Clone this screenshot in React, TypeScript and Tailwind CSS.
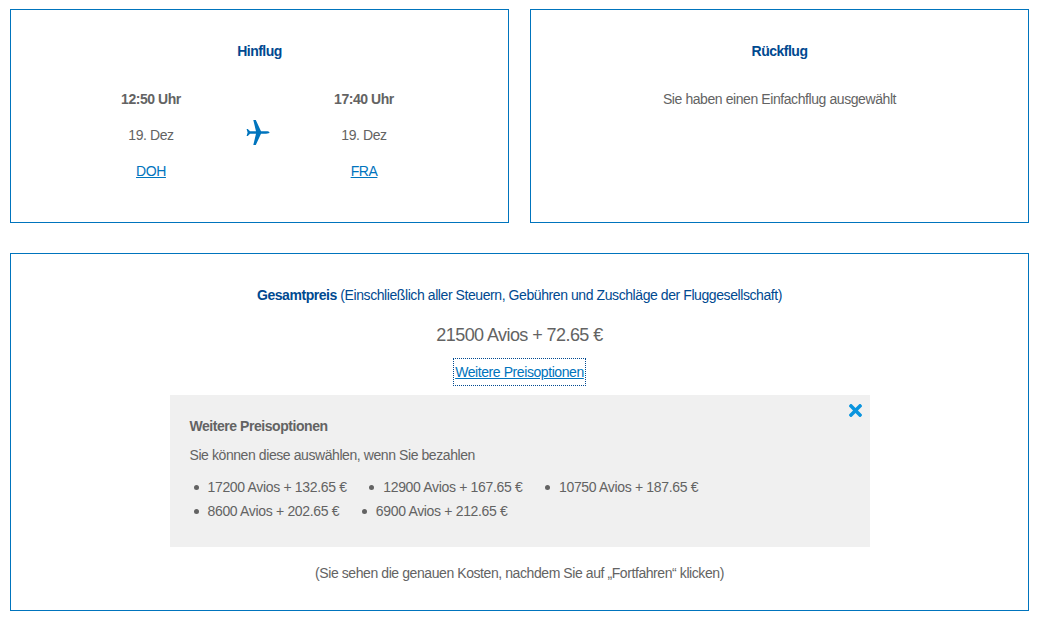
import { FaTimes } from "react-icons/fa";

const options = [
  ["17200 Avios + 132.65 €", "12900 Avios + 167.65 €", "10750 Avios + 187.65 €"],
  ["8600 Avios + 202.65 €", "6900 Avios + 212.65 €"],
];

const Plane = () => (
  <svg viewBox="0 0 24 25" className="w-6 h-[25px] text-[#0074bd]" fill="currentColor">
    <path d="M23.5 12.5C23.5 11.8 22 11.3 20 11.3L15 11.3L9.8 0L7.3 0L10 11.3L4 11.3L1.8 9L0.6 9L1.6 12.5L0.6 16L1.8 16L4 13.7L10 13.7L7.3 25L9.8 25L15 13.7L20 13.7C22 13.7 23.5 13.2 23.5 12.5Z" />
  </svg>
);

const Endpoint = ({ time, code }: { time: string; code: string }) => (
  <div className="flex flex-col items-center">
    <div className="h-9 leading-9 font-bold tracking-[-0.45px]">{time}</div>
    <div className="h-9 leading-9">19. Dez</div>
    <a href="#" className="h-9 leading-9 text-[#0074bd] underline">
      {code}
    </a>
  </div>
);

export default function App() {
  return (
    <div className="w-[1046px] h-[630px] overflow-hidden bg-white pl-2.5 pt-[9px] font-['Liberation_Sans',Arial,sans-serif] text-sm tracking-[-0.42px] text-[#636363]">
      <div className="w-[1019px] flex flex-col gap-[30px]">
        <div className="flex gap-[21px]">
          <section className="w-[499px] h-[214px] border border-[#0074bd] pt-[31px]">
            <h2 className="h-5 leading-5 text-center font-bold tracking-[-0.5px] text-[#004990]">Hinflug</h2>
            <div className="mt-[20px] ml-[65px] grid grid-cols-[150px_63px_150px]">
              <Endpoint time="12:50 Uhr" code="DOH" />
              <div className="flex justify-center pt-[39px]">
                <Plane />
              </div>
              <Endpoint time="17:40 Uhr" code="FRA" />
            </div>
          </section>
          <section className="w-[499px] h-[214px] border border-[#0074bd] pt-[31px] text-center">
            <h2 className="h-5 leading-5 font-bold tracking-[-0.5px] text-[#004990]">Rückflug</h2>
            <p className="mt-[20px] h-9 leading-9">Sie haben einen Einfachflug ausgewählt</p>
          </section>
        </div>

        <section className="h-[358px] border border-[#0074bd] flex flex-col items-center pt-[31px]">
          <p className="h-5 leading-5 text-[#004990]">
            <b className="tracking-[-0.45px]">Gesamtpreis</b> (Einschließlich aller Steuern, Gebühren und Zuschläge der Fluggesellschaft)
          </p>
          <p className="mt-[20px] h-5 leading-5 text-lg tracking-[-0.57px]">21500 Avios + 72.65 €</p>
          <a
            href="#"
            className="mt-[13px] h-[28px] leading-[26px] px-px border border-dotted border-[#004990] text-[#0074bd] underline"
          >
            Weitere Preisoptionen
          </a>
          <div className="relative mt-[9px] w-[700px] h-[152px] bg-[#f0f0f0] pl-5 pt-[21px]">
            <FaTimes className="absolute right-[5px] top-[6px] size-[19px] text-[#0a94de]" />
            <h3 className="h-5 leading-5 font-bold tracking-[-0.45px]">Weitere Preisoptionen</h3>
            <p className="mt-[9px] h-5 leading-5">Sie können diese auswählen, wenn Sie bezahlen</p>
            <div className="mt-[12px] flex flex-col gap-1">
              {options.map((row, i) => (
                <ul key={i} className="flex gap-[22.5px] pl-[4px] tracking-[-0.33px]">
                  {row.map((o) => (
                    <li key={o} className="flex h-5 items-center gap-[9px] leading-5">
                      <span className="size-[5px] rounded-full bg-[#636363]" />
                      {o}
                    </li>
                  ))}
                </ul>
              ))}
            </div>
          </div>
          <p className="mt-[16px] h-5 leading-5">
            (Sie sehen die genauen Kosten, nachdem Sie auf „Fortfahren“ klicken)
          </p>
        </section>
      </div>
    </div>
  );
}
